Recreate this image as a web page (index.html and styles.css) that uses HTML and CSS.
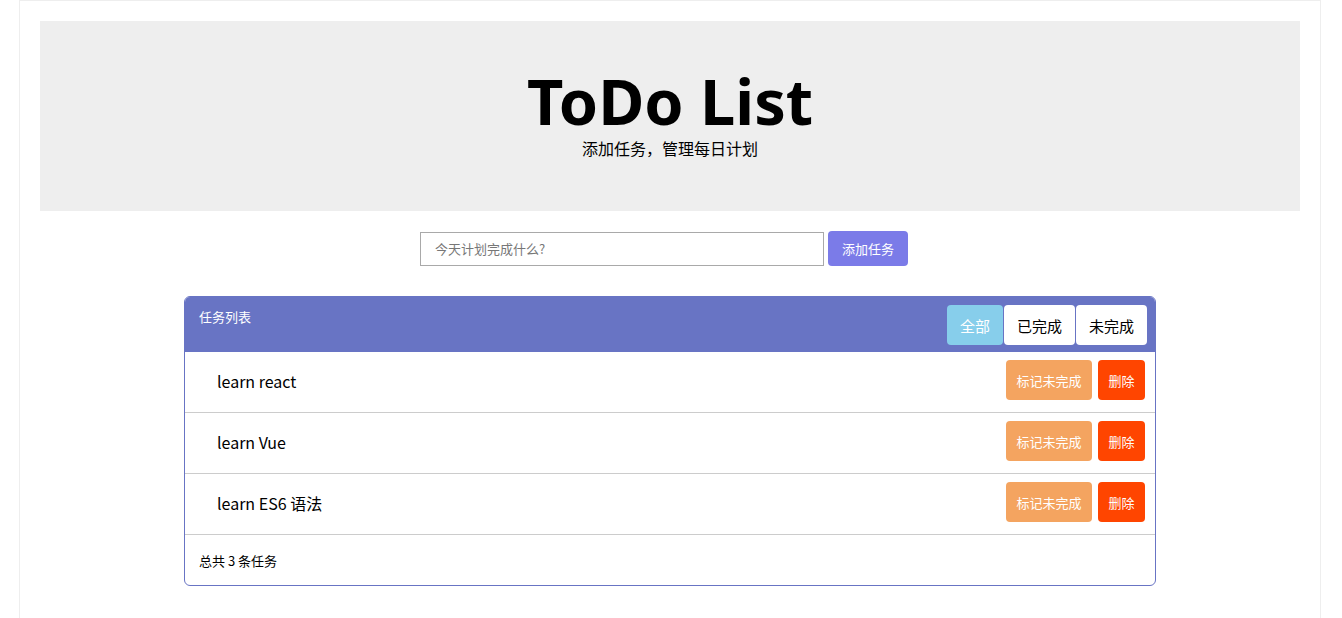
FILE: index.html
```html
<!DOCTYPE html>
<html lang="zh">
<head>
<meta charset="utf-8">
<title>ToDo List</title>
<link rel="stylesheet" href="styles.css">
</head>
<body>
<div class="container">
  <div class="jumbotron">
    <h1 class="title">ToDo List</h1>
    <p class="subtitle">添加任务，管理每日计划</p>
  </div>
  <div class="add-row">
    <input class="add-input" type="text" placeholder="今天计划完成什么?">
    <button class="add-btn">添加任务</button>
  </div>
  <div class="panel">
    <div class="panel-head">
      <span class="panel-title">任务列表</span>
      <div class="filters">
        <button class="filter active">全部</button>
        <button class="filter">已完成</button>
        <button class="filter">未完成</button>
      </div>
    </div>
    <ul class="tasks">
      <li class="task"><span class="task-name">learn react</span><span class="actions"><button class="mark">标记未完成</button><button class="del">删除</button></span></li>
      <li class="task"><span class="task-name">learn Vue</span><span class="actions"><button class="mark">标记未完成</button><button class="del">删除</button></span></li>
      <li class="task"><span class="task-name">learn ES6 语法</span><span class="actions"><button class="mark">标记未完成</button><button class="del">删除</button></span></li>
    </ul>
    <div class="panel-foot">总共 3 条任务</div>
  </div>
</div>
</body>
</html>
```
FILE: styles.css
```css
* { box-sizing: border-box; }
html, body { margin: 0; padding: 0; background: #fff; }
body {
  font-family: "Noto Sans CJK SC", "Noto Sans", sans-serif;
  color: #000;
  font-size: 14px;
}
.container {
  width: 1302px;
  margin-left: 19px;
  border: 1px solid #eee;
  border-bottom: none;
  padding: 20px 20px 32px;
  min-height: 618px;
}
.jumbotron {
  background: #eee;
  height: 190px;
  text-align: center;
  padding-top: 44px;
}
.title {
  margin: 0;
  font-family: "Noto Sans", "Open Sans", sans-serif;
  font-weight: 700;
  font-size: 63px;
  line-height: 72px;
  letter-spacing: 0;
}
.subtitle {
  margin: 0;
  font-size: 16px;
  line-height: 22px;
}
.add-row {
  display: flex;
  justify-content: center;
  align-items: center;
  gap: 4px;
  margin-top: 20px;
  margin-left: -12px;
}
.add-input {
  width: 404px;
  height: 34px;
  border: 1px solid #a9a9a9;
  padding: 0 14px;
  font-family: inherit;
  font-size: 13px;
  outline: none;
}
.add-input::placeholder { color: #777; }
.add-btn {
  height: 35px;
  width: 80px;
  background: #7b7be8;
  color: #fff;
  border: none;
  border-radius: 4px;
  font-family: inherit;
  font-size: 13px;
  padding: 0;
}
.panel {
  width: 972px;
  margin: 30px auto 0;
  border: 1px solid #6874c4;
  border-radius: 6px;
  overflow: hidden;
}
.panel-head {
  background: #6874c4;
  display: flex;
  justify-content: space-between;
  align-items: flex-start;
  height: 55px;
  padding: 8px 8px 0 14px;
}
.panel-title {
  color: #fff;
  font-size: 13px;
  line-height: 24px;
}
.filters { display: flex; gap: 1px; }
.filter {
  height: 40px;
  background: #fff;
  color: #000;
  border: none;
  border-radius: 4px;
  font-family: inherit;
  font-size: 15px;
  width: 71px;
  padding: 0;
}
.filter.active {
  background: #87ceeb;
  color: #fff;
  width: 56px;
}
.tasks { list-style: none; margin: 0; padding: 0; }
.task {
  display: flex;
  justify-content: space-between;
  align-items: center;
  height: 61px;
  border-bottom: 1px solid #ccc;
  padding: 0 10px 0 32px;
}
.task-name { font-size: 16px; line-height: 20px; margin-top: -2px; }
.actions { display: flex; gap: 6px; margin-top: -4px; }
.mark, .del {
  height: 40px;
  border: none;
  border-radius: 4px;
  color: #fff;
  font-family: inherit;
  font-size: 13px;
  padding: 0;
}
.mark { background: #f4a460; width: 86px; }
.del { background: #ff4500; width: 47px; }
.panel-foot {
  height: 50px;
  padding: 0 14px;
  display: flex;
  align-items: center;
  font-size: 13px;
}
```
